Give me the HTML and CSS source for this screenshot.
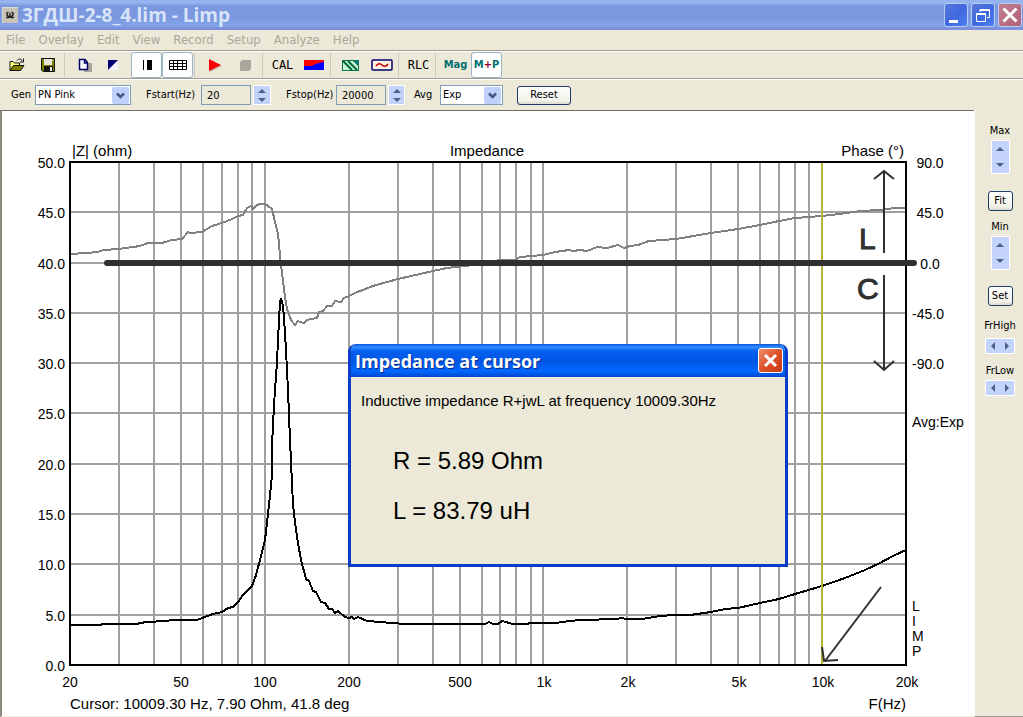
FILE: index.html
```html
<!DOCTYPE html>
<html lang="en">
<head>
<meta charset="utf-8">
<title>3ГДШ-2-8_4.lim - Limp</title>
<link rel="stylesheet" href="styles.css">
</head>
<body>
<div class="app">
  <header class="titlebar">
    <svg class="app-icon" width="16" height="16" viewBox="0 0 16 16"><rect width="16" height="16" fill="#c8c4b8"/><path d="M0 16V0H16" fill="none" stroke="#eee"/><path d="M4 10.500H6.500V9.500L5 8V6L6.500 5M12 10.500H9.500V9.500L11 8V6L9.500 5M8 6V11" fill="none" stroke="#222" stroke-width="1.500"/></svg>
    <h1 class="title">3ГДШ-2-8_4.lim - Limp</h1>
    <div class="window-buttons">
      <button class="win-btn" type="button" aria-label="Minimize"><svg width="22" height="22"><rect x="4" y="16" width="9" height="3" fill="#fff"/></svg></button>
      <button class="win-btn" type="button" aria-label="Restore"><svg width="22" height="22" fill="none" stroke="#fff"><path d="M8 8V5.500H17.500V13.500H15M8 6.500H17"/><path d="M4.500 9.500H13.500V17.500H4.500ZM4 10.500H14"/></svg></button>
      <button class="win-btn win-close" type="button" aria-label="Close"><svg width="22" height="22"><path d="M4.500 4.500L17.500 17.500M17.500 4.500L4.500 17.500" stroke="#fff" stroke-width="3"/></svg></button>
    </div>
  </header>

  <nav class="menu">
    <a href="#">File</a><a href="#">Overlay</a><a href="#">Edit</a><a href="#">View</a><a href="#">Record</a><a href="#">Setup</a><a href="#">Analyze</a><a href="#">Help</a>
  </nav>

  <div class="toolbar">
    <button class="tool" type="button" aria-label="Open"><svg width="18" height="16"><path d="M2 13.500V4.500H5L6.500 6H11.500V8.500" fill="#ffff80" stroke="#111"/><path d="M2 13.500L5.500 8.500H16L12.500 13.500Z" fill="#808000" stroke="#111"/><path d="M9 3.500C11 1 13 2 14.500 4M15.500 1.500V5H12" fill="none" stroke="#111"/></svg></button>
    <button class="tool" type="button" aria-label="Save"><svg width="16" height="16"><path d="M1.500 1.500H14.500V14.500H3L1.500 13Z" fill="#808000" stroke="#111"/><rect x="4" y="2" width="8" height="6" fill="#e8e4d8"/><rect x="4" y="9" width="9" height="6" fill="#111"/><rect x="10" y="10" width="2" height="4" fill="#eee"/><rect x="12.500" y="3" width="1" height="1" fill="#fff"/></svg></button>
    <span class="sep"></span>
    <button class="tool" type="button" aria-label="Copy"><svg width="16" height="16"><rect x="7" y="6" width="8" height="9" fill="#aaa69c"/><path d="M2.500 2.500H8L10.500 5.500V12.500H2.500ZM7.500 3V6H10" fill="#f8f8ff" stroke="#000060" stroke-width="1.500"/></svg></button>
    <button class="tool" type="button" aria-label="Invert colors"><svg width="18" height="16"><rect x="1" y="3" width="10" height="10" fill="#f4f4ff"/><path d="M1 3H11L1 13Z" fill="#000070"/></svg></button>
    <button class="tool pressed" type="button" aria-label="Thick lines"><svg width="16" height="16"><rect x="4" y="3" width="1" height="10"/><rect x="8" y="3" width="5" height="10"/></svg></button>
    <button class="tool pressed" type="button" aria-label="Grid"><svg width="18" height="16"><path d="M.5 3.500H17.500V12.500H.5ZM.5 6.500H17.500M.5 9.500H17.500M4.500 3V13M8.500 3V13M13.500 3V13" fill="#fff" stroke="#000"/></svg></button>
    <span class="sep"></span>
    <button class="tool" type="button" aria-label="Record"><svg width="16" height="16"><path d="M3 4L15 9L3 15Z" fill="#bbb7aa"/><path d="M2 2L14 8L2 14Z" fill="#f00"/></svg></button>
    <button class="tool" type="button" aria-label="Stop"><svg width="16" height="16"><path d="M4 3H13V12L11 14H2V5Z" fill="#aaa69c"/></svg></button>
    <span class="sep"></span>
    <button class="tool mono" type="button">CAL</button>
    <button class="tool" type="button" aria-label="Overlay colors"><svg width="20" height="10"><rect width="20" height="10" fill="#00f"/><path d="M0 0H20V2Q12 3 8 6H0Z" fill="#f00"/></svg></button>
    <span class="sep"></span>
    <button class="tool" type="button" aria-label="Spectrum"><svg width="18" height="11"><rect x=".5" y=".5" width="16" height="10" fill="#c8f4d0" stroke="#087848"/><path d="M1 1L10 10M6 1L15 10" stroke="#006838" stroke-width="2"/><path d="M10 0H17V7Z" fill="#087868"/></svg></button>
    <button class="tool" type="button" aria-label="Generator"><svg width="22" height="12"><rect x="1" y="1" width="20" height="10" rx="1" fill="#fff0e4" stroke="#000068" stroke-width="1.500"/><path d="M5 7Q8 3 11 6T17 5" fill="none" stroke="#c00" stroke-width="1.500"/></svg></button>
    <span class="sep"></span>
    <button class="tool mono" type="button">RLC</button>
    <span class="sep"></span>
    <button class="tool mode" type="button">Mag</button>
    <button class="tool mode pressed" type="button">M<span class="plus">+</span>P</button>
  </div>

  <form class="settings">
    <label for="gen">Gen</label>
    <span class="combo"><select id="gen"><option>PN Pink</option></select><svg width="17" height="17"><path d="M5 6.500L8.500 10L12 6.500" fill="none" stroke="#43577f" stroke-width="2.500"/></svg></span>
    <label for="fstart">Fstart(Hz)</label>
    <input id="fstart" type="text" value="20">
    <span class="spin"><button type="button" aria-label="Increase Fstart"><svg width="8" height="4"><path d="M0 4L4 0L8 4Z"/></svg></button><button type="button" aria-label="Decrease Fstart"><svg width="8" height="4"><path d="M0 0L4 4L8 0Z"/></svg></button></span>
    <label for="fstop">Fstop(Hz)</label>
    <input id="fstop" type="text" value="20000">
    <span class="spin"><button type="button" aria-label="Increase Fstop"><svg width="8" height="4"><path d="M0 4L4 0L8 4Z"/></svg></button><button type="button" aria-label="Decrease Fstop"><svg width="8" height="4"><path d="M0 0L4 4L8 0Z"/></svg></button></span>
    <label for="avg">Avg</label>
    <span class="combo"><select id="avg"><option>Exp</option></select><svg width="17" height="17"><path d="M5 6.500L8.500 10L12 6.500" fill="none" stroke="#43577f" stroke-width="2.500"/></svg></span>
    <button class="push" type="button">Reset</button>
  </form>

  <main class="workspace">
    <section class="chart">
      <svg class="plot" viewBox="2 111 972 605" role="img" aria-label="Impedance and phase against frequency">
        <path class="grid" d="M119 162V665M154 162V665M181 162V665M203 162V665M222 162V665M238 162V665M252 162V665M265 162V665M349 162V665M398 162V665M433 162V665M460 162V665M482 162V665M500 162V665M516 162V665M531 162V665M543 162V665M627 162V665M676 162V665M711 162V665M738 162V665M760 162V665M779 162V665M795 162V665M809 162V665M822 162V665M70 212H906M70 263H906M70 313H906M70 363H906M70 413H906M70 464H906M70 514H906M70 564H906M70 615H906"/>
        <path class="phase" d="M70 254L87 253L98 252L103 250L119 249L140 246L148 243L162 243L172 240L182 239L188 232L190 233L202 232L212 226L222 223L232 219L238 216L243 215L247 208L251 206L253 209L256 206L259 204L265 204L268 206L272 209L275 222L278 234L281 265L285 297L287 309L291 320L295 325L298 321L300 322L304 323L307 320L311 319L317 318L319 312L323 311L327 306L332 306L335 301L341 302L344 298L349 296L357 292L363 290L370 287L376 285L398 279L433 271L447 268L465 266L480 264L500 260L515 260L520 257L543 255L555 252L569 250L573 251L580 250L587 251L597 247L607 248L618 245L624 248L630 246L638 245L649 241L663 240L676 239L711 233L738 229L760 225L779 221L795 218L809 217L822 216L840 214L860 211L880 210L895 208L906 208"/>
        <path class="magnitude" d="M70 625H101L102 624H136L146 622L166 621L172 620H197L205 617L213 614L222 612L228 608L233 607L238 602L243 595L252 586L256 575L260 560L265 540L269 505L272 475L272 445L274 405L277 362L278 340L279 320L280 302L281 298L283 306L284 318L286 350L288 390L290 440L293 505L295 522L298 543L301 560L306 579L309 581L313 591L316 592L321 602L325 603L329 609L332 609L335 613L338 611L345 617L349 618L352 617L354 619L358 617L367 621L380 622L405 624H485L489 622L493 624H498L502 621L513 624H527L530 623H555L570 621L580 620H590L598 620L600 619H617L621 618L627 619H642L660 616L675 615H690L711 612L725 609L738 608L760 603L779 599L795 594L822 586L845 578L865 570L880 563L893 556L906 550"/>
        <path class="frame" d="M70 162H906V665H70Z"/>
        <path class="cursor" d="M822 163V664"/>
        <path class="zero" d="M107 263H914"/>
        <path class="arrow" d="M884 253V171M874 179L884 171L894 179M884 275V370M874 361L884 370L894 361M881 587L825 661M822 647L824 661L838 660"/>
        <g class="head">
          <text x="72" y="156">|Z| (ohm)</text>
          <text class="mid" x="487" y="156">Impedance</text>
          <text class="end" x="904" y="156">Phase (°)</text>
        </g>
        <g class="end">
          <text x="65" y="168">50.0</text><text x="65" y="218">45.0</text><text x="65" y="269">40.0</text><text x="65" y="319">35.0</text><text x="65" y="369">30.0</text><text x="65" y="419">25.0</text><text x="65" y="470">20.0</text><text x="65" y="520">15.0</text><text x="65" y="570">10.0</text><text x="65" y="621">5.0</text><text x="65" y="671">0.0</text>
        </g>
        <g class="mid">
          <text x="930" y="168">90.0</text><text x="930" y="218">45.0</text><text x="930" y="269">0.0</text><text x="928" y="319">-45.0</text><text x="928" y="369">-90.0</text>
          <text x="70" y="687">20</text><text x="181" y="687">50</text><text x="265" y="687">100</text><text x="349" y="687">200</text><text x="460" y="687">500</text><text x="544" y="687">1k</text><text x="628" y="687">2k</text><text x="739" y="687">5k</text><text x="823" y="687">10k</text><text x="907" y="687">20k</text>
        </g>
        <text x="912" y="427">Avg:Exp</text>
        <text x="912" y="611">L</text><text x="912" y="626">I</text><text x="912" y="641">M</text><text x="912" y="656">P</text>
        <g class="head">
          <text x="70" y="709">Cursor: 10009.30 Hz, 7.90 Ohm, 41.8 deg</text>
          <text class="end" x="906" y="709">F(Hz)</text>
        </g>
        <g class="region"><text x="859" y="249">L</text><text x="857" y="299">C</text></g>
      </svg>

      <div class="dialog" role="dialog" aria-labelledby="dialog-title">
        <div class="dialog-bar">
          <h2 id="dialog-title">Impedance at cursor</h2>
          <button class="dialog-close" type="button" aria-label="Close dialog"><svg width="23" height="23"><path d="M6 6L17 17M17 6L6 17" stroke="#fff" stroke-width="3"/></svg></button>
        </div>
        <div class="dialog-body">
          <p class="note">Inductive impedance R+jwL at frequency 10009.30Hz</p>
          <p class="value">R = 5.89 Ohm</p>
          <p class="value">L = 83.79 uH</p>
        </div>
      </div>
    </section>

    <aside class="scale">
      <span class="scale-label">Max</span>
      <span class="spin tall"><button type="button" aria-label="Increase maximum"><svg width="8" height="4"><path d="M0 4L4 0L8 4Z"/></svg></button><button type="button" aria-label="Decrease maximum"><svg width="8" height="4"><path d="M0 0L4 4L8 0Z"/></svg></button></span>
      <button class="push fit" type="button">Fit</button>
      <span class="scale-label">Min</span>
      <span class="spin tall"><button type="button" aria-label="Increase minimum"><svg width="8" height="4"><path d="M0 4L4 0L8 4Z"/></svg></button><button type="button" aria-label="Decrease minimum"><svg width="8" height="4"><path d="M0 0L4 4L8 0Z"/></svg></button></span>
      <button class="push set" type="button">Set</button>
      <span class="scale-label">FrHigh</span>
      <span class="spin wide high"><button type="button" aria-label="Lower high frequency"><svg width="4" height="8"><path d="M4 0L0 4L4 8Z"/></svg></button><button type="button" aria-label="Raise high frequency"><svg width="4" height="8"><path d="M0 0L4 4L0 8Z"/></svg></button></span>
      <span class="scale-label">FrLow</span>
      <span class="spin wide"><button type="button" aria-label="Lower low frequency"><svg width="4" height="8"><path d="M4 0L0 4L4 8Z"/></svg></button><button type="button" aria-label="Raise low frequency"><svg width="4" height="8"><path d="M0 0L4 4L0 8Z"/></svg></button></span>
    </aside>
  </main>
</div>
</body>
</html>
```
FILE: styles.css
```css
* { box-sizing: border-box; }

body {
  margin: 0;
  background: #ece9d8;
  color: #000;
  font: 11px/14px "DejaVu Sans Condensed", "DejaVu Sans", sans-serif;
}

h1, h2, p { margin: 0; }
button, input, select { font: inherit; color: inherit; padding: 0; margin: 0; border: 0; }
svg { display: block; flex: none; }

.app { display: flex; flex-direction: column; min-height: 100vh; }

.titlebar {
  display: flex;
  align-items: center;
  height: 30px;
  padding: 0 1px 0 2px;
  background: linear-gradient(#8fb0ee 0, #9ab8f0 2px, #7b97e0 6px, #7b97e0 18px, #82a6ea 26px, #7d8edc 28px);
}
.title {
  flex: 1;
  margin-left: 4px;
  color: #d8e4f8;
  font: bold 19px/28px "Open Sans", sans-serif;
}
.window-buttons { display: flex; gap: 3px; }
.win-btn {
  width: 24px;
  height: 24px;
  border: 1px solid #b8ccf4;
  border-radius: 3px;
  background: linear-gradient(135deg, #5878d8, #3f68e0 50%, #5080f0);
}
.win-close { background: linear-gradient(135deg, #c08090, #b06078); }

.menu {
  display: flex;
  gap: 13px;
  height: 21px;
  padding-left: 6px;
  border-bottom: 1px solid #a09c90;
  font: 13px/20px "DejaVu Sans Condensed", "DejaVu Sans", sans-serif;
}
.menu a { color: #aaa797; text-decoration: none; }

.toolbar {
  display: flex;
  align-items: center;
  height: 28px;
  padding-left: 1px;
  border-top: 1px solid #fff;
  border-bottom: 1px solid #a09c90;
}
.tool {
  display: flex;
  align-items: center;
  justify-content: center;
  width: 31px;
  height: 26px;
  background: none;
}
.tool.pressed { border: 1px solid #98b5c8; border-radius: 3px; background: #fff; }
.mono { font: 12px/14px "DejaVu Sans Mono", monospace; }
.mode { color: #007070; font-weight: bold; }
.plus { color: #900030; }
.sep { width: 6px; height: 24px; border-left: 1px solid #cdc9b8; margin-left: 1px; margin-right: -1px; }

.settings {
  display: grid;
  grid-template-columns: 24px 96px 15px 55px 50px 2px 18px 15px 50px 50px 2px 17px 9px 26px 63px 14px 54px;
  align-items: center;
  height: 31px;
  padding-left: 11px;
  border-top: 1px solid #fff;
}
.settings > :nth-child(1) { grid-column: 1; }
.settings > :nth-child(2) { grid-column: 2; }
.settings > :nth-child(3) { grid-column: 4; }
.settings > :nth-child(4) { grid-column: 5; }
.settings > :nth-child(5) { grid-column: 7; }
.settings > :nth-child(6) { grid-column: 9; }
.settings > :nth-child(7) { grid-column: 10; }
.settings > :nth-child(8) { grid-column: 12; }
.settings > :nth-child(9) { grid-column: 14; }
.settings > :nth-child(10) { grid-column: 15; }
.settings > :nth-child(11) { grid-column: 17; }
.settings label { white-space: nowrap; }
.settings input {
  height: 20px;
  padding-left: 5px;
  width: 100%;
  border: 1px solid #7f9db9;
  background: #ece9d8;
}

.combo { display: grid; align-items: center; height: 20px; }
.combo select {
  grid-area: 1 / 1;
  height: 20px;
  padding-left: 2px;
  border: 1px solid #7f9db9;
  border-radius: 0;
  background: #fff;
  appearance: none;
}
.combo svg {
  grid-area: 1 / 1;
  justify-self: end;
  margin-right: 2px;
  border-radius: 2px;
  background: #bfd0fa;
  pointer-events: none;
}

.spin {
  display: flex;
  flex-direction: column;
  height: 20px;
  border: 1px solid #fff;
  background: #c3d3fb;
}
.spin button {
  display: flex;
  flex: 1;
  align-items: center;
  justify-content: center;
  background: none;
}
.spin path { fill: #4d6185; }
.spin.tall { width: 19px; height: 34px; }
.spin.wide { flex-direction: row; width: 30px; height: 16px; }

.push {
  height: 19px;
  border: 1px solid #1c3d66;
  border-radius: 3px;
  background: linear-gradient(#fff, #f2f1ea 80%, #dcd8cc);
}

.workspace { display: flex; flex: 1; }
.chart {
  position: relative;
  flex: 1;
  border-top: 1px solid #716f64;
  border-left: 2px solid #8b897c;
  border-bottom: 1px solid #f1efe2;
  background: #fff;
}
.plot { width: 100%; height: auto; font: 14px "Liberation Sans", Arial, sans-serif; }
.grid { fill: none; stroke: #a0a0a0; stroke-width: 2; }
.phase { fill: none; stroke: #808080; stroke-width: 2; shape-rendering: crispEdges; }
.magnitude { fill: none; stroke: #000; stroke-width: 2; shape-rendering: crispEdges; }
.frame { fill: none; stroke: #000; stroke-width: 2; }
.cursor { stroke: #b8b438; stroke-width: 2; }
.zero { stroke: #303030; stroke-width: 6; stroke-linecap: round; }
.arrow { fill: none; stroke: #303030; stroke-width: 2; }
.head { font-size: 15px; }
.mid { text-anchor: middle; }
.end { text-anchor: end; }
.region { fill: #303030; stroke: #303030; stroke-width: 1; font-size: 30px; }

.dialog {
  position: absolute;
  top: 233px;
  left: 346px;
  width: 440px;
  border: 3px solid #0a3cc8;
  border-top: 0;
  border-radius: 8px 8px 0 0;
  background: #ece9d8;
  overflow: hidden;
}
.dialog-bar {
  display: flex;
  align-items: center;
  justify-content: space-between;
  height: 33px;
  margin: 0 -3px;
  padding: 0 5px 0 7px;
  background: linear-gradient(#0a50d8 0, #3090ff 3px, #0560ee 7px, #0055e5 18px, #0068ff 27px, #0048cc);
}
.dialog-bar h2 {
  color: #fff;
  font: bold 18px/28px "Open Sans", sans-serif;
  text-shadow: 1px 1px #0a2c88;
}
.dialog-close {
  width: 25px;
  height: 25px;
  border: 1px solid #fff;
  border-radius: 3px;
  background: linear-gradient(135deg, #ee9070, #dc5028 50%, #c83c14);
}
.dialog-body {
  height: 187px;
  padding: 14px 10px;
  font-family: "Liberation Sans", Arial, sans-serif;
}
.note { margin-bottom: 36px; font-size: 15px; line-height: 20px; }
.value { margin: 0 0 22px 32px; font-size: 24px; line-height: 28px; }

.scale {
  display: flex;
  flex-direction: column;
  align-items: center;
  width: 49px;
  padding: 14px 0 14px 2px;
  border-left: 1px solid #fff;
  border-bottom: 1px solid #a09c90;
}
.scale .push { width: 25px; height: 20px; }
.scale-label { margin-bottom: 2px; }
.fit { margin: 17px 0 9px; }
.set { margin: 16px 0 13px; }
.high { margin: 3px 0 10px; }
```
